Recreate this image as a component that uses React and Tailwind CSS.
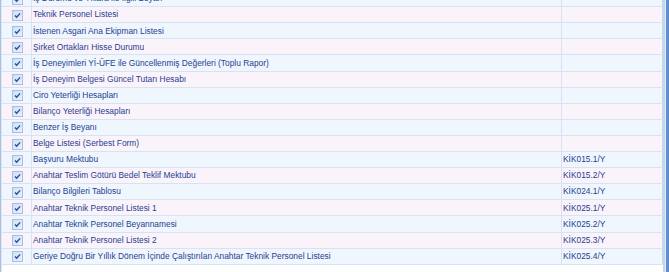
import React from 'react';

const rows = [
  { name: 'İş Durumu ve Yıllara ile İlgili Beyan', code: '' },
  { name: 'Teknik Personel Listesi', code: '' },
  { name: 'İstenen Asgari Ana Ekipman Listesi', code: '' },
  { name: 'Şirket Ortakları Hisse Durumu', code: '' },
  { name: 'İş Deneyimleri Yİ-ÜFE ile Güncellenmiş Değerleri (Toplu Rapor)', code: '' },
  { name: 'İş Deneyim Belgesi Güncel Tutarı Hesabı', code: '' },
  { name: 'Ciro Yeterliği Hesapları', code: '' },
  { name: 'Bilanço Yeterliği Hesapları', code: '' },
  { name: 'Benzer İş Beyanı', code: '' },
  { name: 'Belge Listesi (Serbest Form)', code: '' },
  { name: 'Başvuru Mektubu', code: 'KİK015.1/Y' },
  { name: 'Anahtar Teslim Götürü Bedel Teklif Mektubu', code: 'KİK015.2/Y' },
  { name: 'Bilanço Bilgileri Tablosu', code: 'KİK024.1/Y' },
  { name: 'Anahtar Teknik Personel Listesi 1', code: 'KİK025.1/Y' },
  { name: 'Anahtar Teknik Personel Beyannamesi', code: 'KİK025.2/Y' },
  { name: 'Anahtar Teknik Personel Listesi 2', code: 'KİK025.3/Y' },
  { name: 'Geriye Doğru Bir Yıllık Dönem İçinde Çalıştırılan Anahtar Teknik Personel Listesi', code: 'KİK025.4/Y' }
];

function Check() {
  return (
    <svg width="11" height="11" viewBox="0 0 11 11">
      <defs>
        <linearGradient id="cb" x1="0" y1="0" x2="1" y2="1">
          <stop offset="0" stopColor="#cfdff4" />
          <stop offset="1" stopColor="#eaf1fb" />
        </linearGradient>
      </defs>
      <rect x="0.5" y="0.5" width="10" height="10" fill="url(#cb)" stroke="#a6c0e4" />
      <path d="M3 5.5 L4.7 7.3 L8.1 3.4" fill="none" stroke="#2a4aa3" strokeWidth="1.4" />
    </svg>
  );
}

export default function App() {
  return (
    <div className="flex h-[272px] w-[669px] overflow-hidden bg-white font-['Liberation_Sans',Arial,sans-serif] text-[8.4px] text-[#1f3f92]">
      <div className="w-px shrink-0 bg-[#a9c2e4]" />
      <div className="w-px shrink-0 bg-[#dbe6f5]" />
      <div className="flex min-w-0 flex-1 flex-col">
        <div className="mt-[-8.9px]">
          {rows.map((r, i) => (
            <div
              key={r.name}
              className={`flex h-[16.1px] items-center border-b border-[#d7e3f4] ${i % 2 ? 'bg-[#fbf3fa]' : 'bg-[#f0f6fe]'}`}
            >
              <div className="flex h-full w-[30px] shrink-0 items-center justify-center border-r border-[#d7e3f4] pl-[1px] pt-[1px]">
                <Check />
              </div>
              <div className="flex h-full w-[530px] shrink-0 items-center whitespace-nowrap border-r border-[#d7e3f4] pl-[1px]">
                {r.name}
              </div>
              <div className="flex h-full flex-1 items-center whitespace-nowrap border-r border-[#c9d9ef] pl-[1px]">
                {r.code}
              </div>
            </div>
          ))}
        </div>
      </div>
      <div className="flex w-[6px] shrink-0">
        <div className="w-[2px] bg-[#c4d6ee]" />
        <div className="w-px bg-[#e3ecf8]" />
        <div className="w-[3px] bg-[#5f8fcf]" />
      </div>
    </div>
  );
}
